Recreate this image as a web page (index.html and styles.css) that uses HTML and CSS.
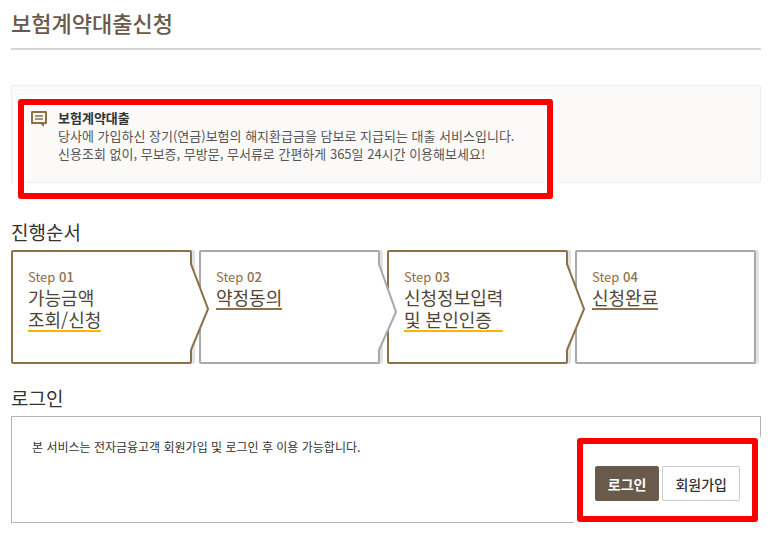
FILE: index.html
```html
<!DOCTYPE html>
<html lang="ko">
<head>
  <meta charset="UTF-8">
  <meta name="viewport" content="width=device-width, initial-scale=1.0">
  <title>보험계약대출신청</title>
  <link rel="stylesheet" href="styles.css">
</head>
<body>
  <h1>보험계약대출신청</h1>

  <div class="notice">
    <svg class="notice-icon" width="16" height="16" viewBox="0 0 16 16" aria-hidden="true">
      <path d="M1 1h14v11H1z" fill="none" stroke="#8c7048" stroke-width="2" stroke-linejoin="round"/>
      <path d="M4 5h8M4 8h8" stroke="#8c7048" stroke-width="1.4"/>
      <path d="M9 12.5h4V16z" fill="#8c7048"/>
    </svg>
    <div class="notice-text">
      <strong>보험계약대출</strong>
      <p>당사에 가입하신 장기(연금)보험의 해지환급금을 담보로 지급되는 대출 서비스입니다.</p>
      <p>신용조회 없이, 무보증, 무방문, 무서류로 간편하게 365일 24시간 이용해보세요!</p>
    </div>
    <span class="mark mark-notice"></span>
  </div>

  <h2>진행순서</h2>
  <ol class="steps">
    <li class="step brown">
      <p class="step-no">Step <b>01</b></p>
      <p class="step-name yellow">가능금액<br>조회/신청</p>
      <svg class="arrow" width="20" height="90" viewBox="0 0 20 90" aria-hidden="true">
        <path d="M0 0H2V1L19 46L2 87V90H0z" fill="#fff"/>
        <path d="M2 0V1L19 46L2 87V90" fill="none" stroke="#8c7048" stroke-width="2"/>
      </svg>
    </li>
    <li class="step gray">
      <p class="step-no">Step <b>02</b></p>
      <p class="step-name">약정동의</p>
      <svg class="arrow" width="20" height="90" viewBox="0 0 20 90" aria-hidden="true">
        <path d="M0 0H2V1L19 49L2 87V90H0z" fill="#fff"/>
        <path d="M2 0V1L19 49L2 87V90" fill="none" stroke="#a9a9a9" stroke-width="2"/>
      </svg>
    </li>
    <li class="step brown">
      <p class="step-no">Step <b>03</b></p>
      <p class="step-name yellow">신청정보입력<br>및 본인인증</p>
      <svg class="arrow" width="20" height="90" viewBox="0 0 20 90" aria-hidden="true">
        <path d="M0 0H2V1L19 46L2 87V90H0z" fill="#fff"/>
        <path d="M2 0V1L19 46L2 87V90" fill="none" stroke="#8c7048" stroke-width="2"/>
      </svg>
    </li>
    <li class="step gray">
      <p class="step-no">Step <b>04</b></p>
      <p class="step-name">신청완료</p>
    </li>
  </ol>

  <h2>로그인</h2>
  <div class="login">
    <p>본 서비스는 전자금융고객 회원가입 및 로그인 후 이용 가능합니다.</p>
    <div class="buttons">
      <button type="button" class="btn btn-login">로그인</button>
      <button type="button" class="btn btn-join">회원가입</button>
    </div>
    <span class="mark mark-login"></span>
  </div>
</body>
</html>
```
FILE: styles.css
```css
* {
  box-sizing: border-box;
}
body {
  margin: 0;
  padding: 6px 16px 12px 11px;
  background-color: #fff;
  color: #333;
  font-family: "Noto Sans CJK KR", sans-serif;
  font-size: 13px;
  line-height: 18px;
}
p {
  margin: 0;
}
h1 {
  margin: 0 0 35px;
  padding-bottom: 10px;
  border-bottom: 2px solid #d9d4cf;
  color: #6a5a4c;
  font-size: 22px;
  font-weight: 500;
  line-height: 32px;
}
h2 {
  margin: 0 0 4px;
  color: #333;
  font-size: 19px;
  font-weight: 400;
  line-height: 28px;
}
.notice {
  position: relative;
  display: flex;
  gap: 11px;
  margin-bottom: 35px;
  padding: 23px 19px 19px;
  border: 1px solid #ececec;
  border-radius: 2px;
  background-color: #fbfaf9;
}
.notice-icon {
  margin-top: 2px;
}
.notice-text {
  color: #555;
}
.notice-text strong {
  display: block;
  color: #333;
}
/* 빨간 강조 테두리 */
.mark {
  position: absolute;
  border: 6px solid #f00;
  border-radius: 3px;
  box-shadow: 0 0 0 4px #fff, inset 0 0 0 3px #fff;
  pointer-events: none;
}
.mark-notice {
  top: 13px;
  right: 207px;
  bottom: -17px;
  left: 6px;
}
.notice-icon,
.notice-text {
  z-index: 1;
}
.steps {
  display: grid;
  grid-template-columns: repeat(4, 1fr);
  gap: 7px;
  margin: 0 0 20px;
  padding: 0 5px 0 0;
  list-style: none;
}
.step {
  position: relative;
  min-height: 114px;
  padding: 16px 15px;
  border: 2px solid #a9a9a9;
  border-radius: 2px;
  box-shadow: 3px 0 0 #e3e3e3;
}
.brown {
  border-color: #8c7048;
}
.step-no {
  color: #8c7048;
}
.step-no b {
  font-weight: 500;
}
.step-name {
  display: inline-block;
  border-bottom: 2px solid #8c7048;
  color: #504638;
  font-size: 18px;
  line-height: 22px;
}
.yellow {
  border-color: #f8b500;
}
/* 다음 단계로 이어지는 화살표 */
.arrow {
  position: absolute;
  top: 11px;
  right: -19px;
  z-index: 1;
}
.login {
  position: relative;
  display: flex;
  flex-direction: column;
  justify-content: space-between;
  min-height: 107px;
  padding: 21px 20px;
  border: 1px solid #b3b3b3;
}
.login p {
  font-size: 12px;
}
.buttons {
  display: flex;
  justify-content: flex-end;
  gap: 3px;
  margin-top: 10px;
}
.btn {
  height: 35px;
  padding: 0 12px;
  border: 1px solid #ccc;
  border-radius: 2px;
  background-color: #fff;
  color: #333;
  font-family: inherit;
  font-size: 14px;
  font-weight: 500;
  cursor: pointer;
}
.btn-login {
  border-color: #6a5a4c;
  background-color: #6a5a4c;
  color: #fff;
  font-weight: 700;
}
.mark-login {
  top: 21px;
  right: 2px;
  bottom: 0;
  width: 181px;
}
```
